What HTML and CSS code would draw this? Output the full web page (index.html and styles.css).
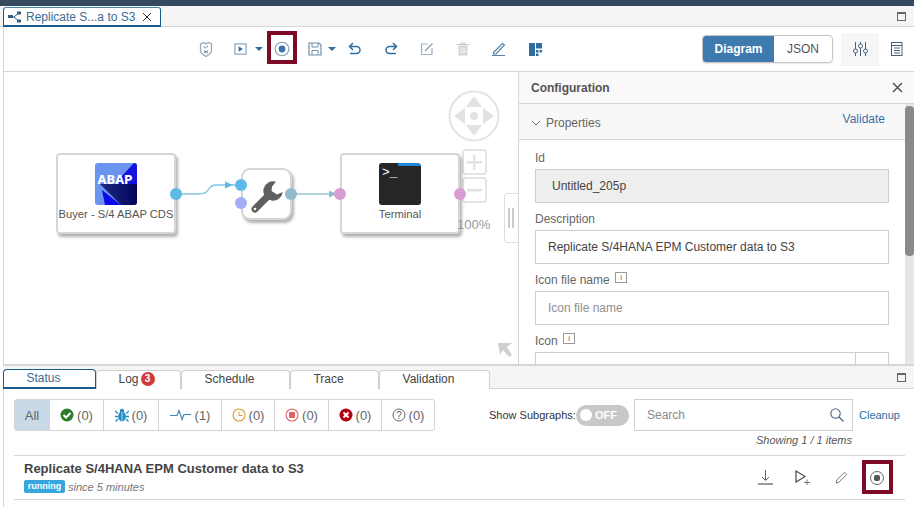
FILE: index.html
```html
<!DOCTYPE html>
<html>
<head>
    <title>Replicate S/4HANA EPM Customer data to S3</title>
    <link rel="stylesheet" href="styles.css">
</head>
<body>
    <div class="topbar"></div>

    <div class="tabstrip">
        <div class="doc-tab">
            <svg width="13" height="12" viewBox="0 0 13 12"><path d="M2 6h4M6 6l4-3.500M6 6l4 3.500" stroke="#34607f" fill="none"/><rect x="0" y="4" width="5" height="3" fill="#34607f"/><rect x="9" y="0.500" width="4" height="3" fill="#34607f"/><rect x="9" y="8.500" width="4" height="3" fill="#34607f"/></svg>
            <span class="doc-tab-name">Replicate S...a to S3</span>
            <svg width="10" height="10" viewBox="0 0 10 10"><path d="M1 1l8 8M9 1l-8 8" stroke="#333" fill="none"/></svg>
        </div>
        <span class="maximize"></span>
    </div>

    <div class="toolbar">
        <div class="tool tool-first"><svg width="14" height="16" viewBox="0 0 14 16"><path d="M1.500 3l3-1.500 2.500 1.500 2.500-1.500 3 1.500v7c0 2-3 4-5.500 5.500C4.500 14 1.500 12 1.500 10z" fill="none" stroke="#9aa7b2" stroke-width="1.300"/><path d="M4.500 5.500l2 1.500 2.500-2M5 9.500l4 2.500M9 9.500l-4 2.500" fill="none" stroke="#5c7f9c"/></svg></div>
        <div class="tool tool-group"><svg width="14" height="14" viewBox="0 0 14 14"><rect x="1" y="1.500" width="12" height="11" fill="none" stroke="#7f9db8" stroke-width="1.200"/><path d="M5 4l4.500 3L5 10z" fill="#2f6da0"/></svg><span class="caret"></span></div>
        <div class="tool tool-stop"><svg width="16" height="16" viewBox="0 0 16 16"><circle cx="8" cy="8" r="6.800" fill="none" stroke="#7f9db8" stroke-width="1.100"/><circle cx="8" cy="8" r="3.400" fill="#3d74a8"/></svg></div>
        <div class="tool tool-group tool-save"><svg width="14" height="14" viewBox="0 0 14 14"><path d="M1 1h10l2 2v10H1z" fill="none" stroke="#6f90ab" stroke-width="1.200"/><path d="M4 1v4h6V1M4 13V8.500h6V13" fill="none" stroke="#6f90ab"/></svg><span class="caret"></span></div>
        <div class="tool"><svg width="14" height="14" viewBox="0 0 14 14"><path d="M5 1L1.500 4.500 5 8M2 4.500h6.500a3.500 3.500 0 0 1 0 7H2" fill="none" stroke="#2f6da0" stroke-width="1.500"/></svg></div>
        <div class="tool"><svg width="14" height="14" viewBox="0 0 14 14"><path d="M9 1l3.500 3.500L9 8M12 4.500H5.500a3.500 3.500 0 0 0 0 7H12" fill="none" stroke="#2f6da0" stroke-width="1.500"/></svg></div>
        <div class="tool"><svg width="14" height="14" viewBox="0 0 14 14"><path d="M8 2H1.500v10.500H12V6" fill="none" stroke="#9db3c5" stroke-width="1.200"/><path d="M5 9l7.500-7.500" stroke="#7d9ab2" stroke-width="1.200"/></svg></div>
        <div class="tool"><svg width="12" height="14" viewBox="0 0 12 14"><path d="M0 2.500h12M4 2.500V1h4v1.500" stroke="#c9c9c9" fill="none"/><path d="M1.500 3.500h9V13.500h-9z" fill="#d4d4d4"/><path d="M4 5.500v6M6 5.500v6M8 5.500v6" stroke="#f5f5f5"/></svg></div>
        <div class="tool"><svg width="14" height="14" viewBox="0 0 14 14"><path d="M1.500 10.500L10.500 1.500l2 1.500-8.500 9H1.500z" fill="none" stroke="#4f81ab" stroke-width="1.100"/><path d="M0 13.500h13" stroke="#4f81ab"/></svg></div>
        <div class="tool"><svg width="13" height="13" viewBox="0 0 13 13"><rect width="6" height="13" fill="#2f6da0"/><rect x="7" width="6" height="5.500" fill="#2f6da0"/><rect x="7" y="7" width="2.500" height="2.500" fill="#2f6da0"/><rect x="10.500" y="7" width="2.500" height="2.500" fill="#2f6da0"/><rect x="7" y="10.500" width="2.500" height="2.500" fill="#2f6da0"/></svg></div>
        <div class="toolbar-right">
            <div class="segmented">
                <span class="seg seg-on">Diagram</span>
                <span class="seg">JSON</span>
            </div>
            <div class="side-btn side-btn-on"><svg width="15" height="14" viewBox="0 0 15 14"><path d="M2.500 0v14M7.500 0v14M12.500 0v14" stroke="#47617a"/><circle cx="2.500" cy="9" r="2" fill="#fff" stroke="#47617a"/><circle cx="7.500" cy="4" r="2" fill="#fff" stroke="#47617a"/><circle cx="12.500" cy="9" r="2" fill="#fff" stroke="#47617a"/></svg></div>
            <div class="side-btn"><svg width="12" height="14" viewBox="0 0 12 14"><rect x="0.500" y="0.500" width="10.500" height="13" fill="none" stroke="#47617a"/><path d="M0.500 3.500h10.500M3 6h6M3 8.500h6M3 11h6" stroke="#47617a"/></svg></div>
        </div>
    </div>

    <div class="main">
        <div class="canvas">
            <svg class="links" width="514" height="291" viewBox="0 0 514 291">
                <path d="M172 122h22c14 0 8-9 18-9h20" fill="none" stroke="#7cc4e6" stroke-width="1.300"/>
                <path d="M229 113l-8-3.500v7z" fill="#5fb8e3"/>
                <path d="M287 122h42" fill="none" stroke="#9cc2d3" stroke-width="1.300"/>
                <path d="M333 122l-8-3.500v7z" fill="#93bccd"/>
                <g fill="none" stroke="#e4e4e4" stroke-width="2">
                    <circle cx="470" cy="44" r="24.500"/>
                    <rect x="459" y="78" width="23" height="24" rx="3"/>
                    <rect x="459" y="106" width="23" height="24" rx="3"/>
                </g>
                <g fill="#e2e2e2">
                    <path d="M470 24l8 11h-16zM470 64l8-11h-16zM450 44l11-8v16zM490 44l-11-8v16z"/>
                    <circle cx="470" cy="44" r="4"/>
                    <path d="M463 89h15v2.500h-15zM469 83h2.500v15H469zM463 117h15v2.500h-15z"/>
                    <path d="M494 271h14l-5 4 5 8-3 2-6-7-3 5z" fill="#cfcfcf"/>
                </g>
            </svg>

            <div class="node node-abap">
                <svg width="42" height="42" viewBox="0 0 42 42">
                    <defs><linearGradient id="abapShade" x1="0" y1="0" x2="1" y2="0"><stop offset="0" stop-color="#1c2a80"/><stop offset="1" stop-color="#04045c"/></linearGradient></defs>
                    <rect width="42" height="42" rx="3" fill="#6b93f0"/>
                    <path d="M24 16L39 0a3 3 0 0 1 3 3v18H24z" fill="#1414e0"/>
                    <path d="M5 21h37v18a3 3 0 0 1-3 3H26z" fill="url(#abapShade)"/>
                    <path d="M7 27l19 15H10z" fill="#0a0ae6"/>
                    <text x="20" y="21" text-anchor="middle" class="abap-text">ABAP</text>
                </svg>
                <span class="node-label">Buyer - S/4 ABAP CDS</span>
            </div>
            <div class="node node-tool">
                <svg width="36" height="36" viewBox="0 0 36 36"><path d="M5 29l12-12" stroke="#5f5f5f" stroke-width="7" stroke-linecap="round"/><path d="M26 1.700A9.700 9.700 0 1 0 32.700 12L27 14.500 21.500 11 22 6.500z" fill="#5f5f5f"/><circle cx="5" cy="29" r="1.300" fill="#fff"/></svg>
            </div>
            <div class="node node-term">
                <div class="term-icon"><span class="term-prompt">&gt;_</span></div>
                <span class="node-label">Terminal</span>
            </div>

            <span class="port port-a"></span>
            <span class="port port-b"></span>
            <span class="port port-c"></span>
            <span class="port port-d"></span>
            <span class="port port-e"></span>
            <span class="port port-f"></span>
            <span class="zoom-level">100%</span>
            <div class="handle"></div>
        </div>

        <div class="config">
            <div class="config-head">
                <span>Configuration</span>
                <svg width="11" height="11" viewBox="0 0 11 11"><path d="M1 1l9 9M10 1l-9 9" stroke="#555" stroke-width="1.500" fill="none"/></svg>
            </div>
            <div class="config-body">
                <div class="config-form">
                    <div class="props-head">
                        <svg width="10" height="6" viewBox="0 0 10 6"><path d="M1 1l4 4 4-4" stroke="#777" fill="none"/></svg>
                        <span class="props-title">Properties</span>
                        <a class="validate">Validate</a>
                    </div>
                    <label class="field-label">Id</label>
                    <div class="field field-off">Untitled_205p</div>
                    <label class="field-label">Description</label>
                    <div class="field">Replicate S/4HANA EPM Customer data to S3</div>
                    <label class="field-label">Icon file name <span class="info">i</span></label>
                    <div class="field field-empty">Icon file name</div>
                    <label class="field-label">Icon <span class="info">i</span></label>
                    <div class="field field-split"><span></span></div>
                </div>
                <div class="scrollbar"><span class="thumb"></span></div>
            </div>
        </div>
    </div>

    <div class="bottom">
        <div class="bottom-tabs">
            <span class="btab btab-on btab-status">Status</span>
            <span class="btab btab-log">Log<span class="badge">3</span></span>
            <span class="btab btab-schedule">Schedule</span>
            <span class="btab btab-trace">Trace</span>
            <span class="btab btab-validation">Validation</span>
            <span class="maximize"></span>
        </div>
        <div class="status-panel">
            <div class="filter-row">
                <div class="filters">
                    <span class="filter filter-on">All</span>
                    <span class="filter f1"><svg width="14" height="14" viewBox="0 0 14 14"><circle cx="7" cy="7" r="6.500" fill="#2b7d2b"/><path d="M3.500 7l2.500 2.500 4.500-4.500" stroke="#fff" stroke-width="2" fill="none"/></svg>(0)</span>
                    <span class="filter f2"><svg width="14" height="14" viewBox="0 0 14 14"><ellipse cx="7" cy="8.500" rx="3.800" ry="5" fill="#1f8dc4"/><circle cx="7" cy="3" r="2.200" fill="#1f8dc4"/><path d="M0 3l3 2.500M14 3l-3 2.500M0 8.500h3M11 8.500h3M0.500 13.500L3 11M13.500 13.500L11 11" stroke="#1f8dc4" stroke-width="1.300"/><path d="M7 4v9" stroke="#fff" stroke-width=".7"/></svg>(0)</span>
                    <span class="filter f3"><svg width="22" height="12" viewBox="0 0 22 12"><path d="M0 6.500h7l2-5 3 9 2-5h7" fill="none" stroke="#3d86b8" stroke-width="1.200"/></svg>(1)</span>
                    <span class="filter f4"><svg width="14" height="14" viewBox="0 0 14 14"><circle cx="7" cy="7" r="6" fill="none" stroke="#dd9a3c" stroke-width="1.100"/><path d="M7 3.500V7.500h3.500" fill="none" stroke="#dd9a3c"/></svg>(0)</span>
                    <span class="filter f5"><svg width="14" height="14" viewBox="0 0 14 14"><circle cx="7" cy="7" r="6" fill="none" stroke="#e26565" stroke-width="1.100"/><rect x="4" y="4" width="6" height="6" rx="1" fill="#e26565"/></svg>(0)</span>
                    <span class="filter f6"><svg width="14" height="14" viewBox="0 0 14 14"><circle cx="7" cy="7" r="6.500" fill="#b00012"/><path d="M4.500 4.500l5 5M9.500 4.500l-5 5" stroke="#fff" stroke-width="2"/></svg>(0)</span>
                    <span class="filter f7"><svg width="14" height="14" viewBox="0 0 14 14"><circle cx="7" cy="7" r="6" fill="none" stroke="#666" stroke-width="1"/><text x="7" y="10.500" text-anchor="middle" class="help-text">?</text></svg>(0)</span>
                </div>
                <div class="filter-right">
                    <span class="subgraph-label">Show Subgraphs:</span>
                    <span class="toggle"><span class="knob"></span><span class="toggle-text">OFF</span></span>
                    <div class="search">
                        <span>Search</span>
                        <svg width="14" height="14" viewBox="0 0 14 14"><circle cx="5.500" cy="5.500" r="4.700" fill="none" stroke="#4d6a86" stroke-width="1.100"/><path d="M9 9l4.500 4.500" stroke="#4d6a86" stroke-width="1.300"/></svg>
                    </div>
                    <a class="cleanup">Cleanup</a>
                </div>
            </div>
            <div class="showing">Showing 1 / 1 items</div>
            <div class="run">
                <div class="run-info">
                    <div class="run-title">Replicate S/4HANA EPM Customer data to S3</div>
                    <div class="run-meta"><span class="run-state">running</span><em>since 5 minutes</em></div>
                </div>
                <div class="run-actions">
                    <svg width="15" height="15" viewBox="0 0 15 15"><path d="M7.500 0v10M4 7l3.500 3.500L11 7" fill="none" stroke="#666" stroke-width="1"/><path d="M0 14h15" stroke="#666" stroke-width="1.300"/></svg>
                    <svg width="15" height="15" viewBox="0 0 15 15"><path d="M1 1l9 5.500L1 12z" fill="none" stroke="#555" stroke-width="1.300"/><path d="M9 12.500h6M12 9.500v5.500" stroke="#777"/></svg>
                    <svg width="13" height="13" viewBox="0 0 13 13"><path d="M1 12l.8-3L9.500 1.300l2.200 2.200L4 11.200z" fill="none" stroke="#777"/></svg>
                    <svg width="14" height="14" viewBox="0 0 14 14"><circle cx="7" cy="7" r="6.500" fill="none" stroke="#666"/><rect x="4" y="4" width="6" height="6" rx="2" fill="#555"/></svg>
                </div>
            </div>
        </div>
    </div>

    <span class="callout callout-top"></span>
    <span class="callout callout-row"></span>
</body>
</html>
```

FILE: styles.css
```css
* {
    box-sizing: border-box;
}
html, body {
    margin: 0;
    padding: 0;
    height: 507px;
    overflow: hidden;
}
body {
    font-family: "Liberation Sans", Arial, sans-serif;
    font-size: 12px;
    color: #333;
    background-color: #fff;
    position: relative;
}
.topbar {
    height: 6px;
    background-color: #354a5f;
}

/* document tab */
.tabstrip {
    height: 21px;
    padding: 1px 8px 0 3px;
    background-color: #f5f5f5;
    border-bottom: 1px solid #d5d5d5;
    display: flex;
    justify-content: space-between;
    align-items: flex-start;
}
.doc-tab {
    width: 158px;
    height: 20px;
    background-color: #fff;
    border: 1px solid #155a8a;
    border-top-color: #4f85ab;
    border-bottom-width: 2px;
    border-radius: 3px 3px 0 0;
    display: flex;
    align-items: center;
    padding: 0 8px 0 4px;
    color: #3f6b91;
}
.doc-tab-name {
    margin: 0 6px 0 5px;
    flex: 1;
    white-space: nowrap;
}
.maximize {
    width: 9px;
    height: 9px;
    margin-top: 5px;
    border: 1px solid #666;
    border-top-width: 2px;
}

/* toolbar */
.toolbar {
    height: 45px;
    margin-left: 3px;
    border-left: 1px solid #d5d5d5;
    border-bottom: 1px solid #d5d5d5;
    display: flex;
    align-items: center;
}
.tool {
    width: 36px;
    height: 30px;
    flex: none;
    display: flex;
    align-items: center;
    justify-content: center;
}
.tool-first {
    margin-left: 184px;
}
.tool-group {
    width: 31px;
    margin-left: 8px;
    justify-content: flex-start;
    padding-left: 2px;
}
.tool-stop {
    width: 30px;
    margin-left: 4px;
}
.tool-save {
    width: 29px;
    margin-left: 11px;
    padding-left: 0;
}
.tool-group .caret {
    margin-left: 8px;
}
.tool-save .caret {
    margin-left: 6px;
}
.caret {
    border-top: 4px solid #2f6da0;
    border-left: 4px solid transparent;
    border-right: 4px solid transparent;
}
.toolbar-right {
    margin-left: auto;
    display: flex;
    align-items: center;
}
.segmented {
    display: flex;
    width: 131px;
    height: 28px;
    margin-right: 8px;
    border: 1px solid #c8c8c8;
    border-radius: 4px;
    box-shadow: 0 1px 2px rgba(0, 0, 0, 0.1);
    overflow: hidden;
}
.seg {
    flex: 1;
    display: flex;
    align-items: center;
    justify-content: center;
    color: #555;
}
.seg-on {
    flex: none;
    width: 71px;
    background-color: #3f7aae;
    color: #fff;
    font-weight: bold;
}
.side-btn {
    width: 35px;
    height: 33px;
    display: flex;
    align-items: center;
    justify-content: center;
}
.side-btn-on {
    width: 38px;
    background-color: #f6f6f6;
}

/* canvas and config */
.main {
    height: 292px;
    margin-left: 3px;
    border-left: 1px solid #d5d5d5;
    display: flex;
}
.canvas {
    position: relative;
    width: 515px;
    flex: none;
    border-right: 1px solid #d5d5d5;
}
.links {
    position: absolute;
    left: 0;
    top: 0;
}
.node {
    position: absolute;
    background-color: #fff;
    border: 2px solid #d6d6d6;
    border-radius: 4px;
    box-shadow: 2px 3px 3px rgba(0, 0, 0, 0.3);
    display: flex;
    flex-direction: column;
    align-items: center;
    padding-top: 7px;
}
.node-abap {
    left: 52px;
    top: 81px;
    width: 120px;
    height: 81px;
    padding-top: 8px;
}
.node-tool {
    left: 237px;
    top: 96px;
    width: 51px;
    height: 52px;
    border-radius: 9px;
    padding: 10px 0 0 2px;
}
.node-term {
    left: 336px;
    top: 81px;
    width: 120px;
    height: 81px;
    padding-top: 8px;
}
.node-label {
    margin-top: 2px;
    color: #555;
    font-size: 11.200px;
    line-height: 14px;
    white-space: nowrap;
}
.abap-text {
    font-family: "DejaVu Sans", sans-serif;
    font-weight: bold;
    font-size: 11.500px;
    fill: #fff;
}
.term-icon {
    width: 42px;
    height: 42px;
    border-radius: 3px;
    background: linear-gradient(#1f86d8, #1f86d8) right top / 23px 3px no-repeat #262626;
    color: #fff;
    padding: 2px 0 0 3px;
}
.term-prompt {
    font-family: "Liberation Mono", monospace;
    font-size: 13px;
    line-height: 16px;
}
.port {
    position: absolute;
    width: 12px;
    height: 12px;
    border-radius: 50%;
}
.port-a { left: 166px; top: 116px; background-color: #5cbae6; }
.port-b { left: 231px; top: 107px; background-color: #5cbae6; }
.port-c { left: 231px; top: 125px; background-color: #a3aef5; }
.port-d { left: 281px; top: 116px; background-color: #90bcce; }
.port-e { left: 330px; top: 116px; background-color: #d99dd2; }
.port-f { left: 450px; top: 116px; background-color: #d99dd2; }
.zoom-level {
    position: absolute;
    left: 453px;
    top: 145px;
    font-size: 13px;
    color: #9a9a9a;
}
.handle {
    position: absolute;
    right: 0;
    top: 121px;
    width: 14px;
    height: 50px;
    background: linear-gradient(#ccc, #ccc) 3px 14px / 2px 20px no-repeat,
                linear-gradient(#ccc, #ccc) 7px 14px / 2px 20px no-repeat #fff;
    border: 1px solid #ddd;
    border-right: none;
    border-radius: 4px 0 0 4px;
}
.config {
    flex: 1;
    min-width: 0;
    display: flex;
    flex-direction: column;
}
.config-head {
    height: 32px;
    flex: none;
    padding: 0 11px 0 12px;
    background-color: #f9f9f9;
    border-bottom: 1px solid #d5d5d5;
    display: flex;
    align-items: center;
    justify-content: space-between;
    font-weight: bold;
    color: #555;
}
.config-body {
    flex: 1;
    display: flex;
    min-height: 0;
}
.config-form {
    flex: 1;
    overflow: hidden;
}
.props-head {
    height: 36px;
    padding: 3px 20px 0 12px;
    background-color: #f8f8f8;
    border-bottom: 1px solid #d5d5d5;
    display: flex;
    align-items: center;
}
.props-title {
    margin-left: 5px;
    color: #666;
    flex: 1;
}
.validate {
    color: #3f6f9f;
    margin-top: -8px;
}
.field-label {
    display: block;
    margin: 10px 0 0 16px;
    height: 19px;
    line-height: 17px;
    color: #666;
}
.config-form .field-label:nth-of-type(n+2) {
    margin-top: 8px;
}
.field {
    margin-left: 16px;
    width: 354px;
    height: 34px;
    border: 1px solid #cfcfcf;
    display: flex;
    align-items: center;
    padding-left: 12px;
    color: #444;
}
.field-off {
    background-color: #eee;
    padding-left: 16px;
}
.field-empty {
    color: #8f8f8f;
}
.field-split {
    padding-left: 319px;
}
.field-split span {
    height: 100%;
    border-left: 1px solid #cfcfcf;
}
.info {
    display: inline-block;
    width: 12px;
    height: 11px;
    margin: 0 0 7px 2px;
    border: 1px solid #999;
    font-size: 8px;
    line-height: 9px;
    text-align: center;
    vertical-align: middle;
}
.scrollbar {
    width: 9px;
    flex: none;
    background-color: #e6e6e6;
    padding-top: 2px;
}
.thumb {
    display: block;
    height: 150px;
    background-color: #8a8a8a;
    border-radius: 4px;
}

/* bottom panel */
.bottom {
    border-top: 2px solid #d5d5d5;
    margin-left: 3px;
    height: 142px;
}
.bottom-tabs {
    height: 23px;
    padding-right: 8px;
    background-color: #f5f5f5;
    border-bottom: 1px solid #d5d5d5;
    display: flex;
    align-items: flex-end;
}
.btab {
    height: 19px;
    padding: 0 12px 2px 0;
    background-color: #fff;
    border: 1px solid #d0d0d0;
    border-bottom: none;
    border-radius: 4px 4px 0 0;
    display: flex;
    align-items: center;
    justify-content: center;
    color: #444;
    margin-bottom: -1px;
}
.btab-on {
    height: 20px;
    border: 1px solid #155a8a;
    border-bottom-width: 2px;
    color: #3f6b91;
}
.btab-status { width: 93px; }
.btab-log { width: 85px; padding-right: 4px; }
.btab-schedule { width: 109px; }
.btab-trace { width: 89px; }
.btab-validation { width: 111px; }
.badge {
    width: 14px;
    height: 14px;
    margin-left: 2px;
    border-radius: 50%;
    background-color: #d13b3b;
    color: #fff;
    font-size: 10px;
    font-weight: bold;
    text-align: center;
    line-height: 14px;
}
.bottom-tabs .maximize {
    margin: 0 0 6px auto;
}
.status-panel {
    padding: 10px 14px 0 10px;
    border-left: 1px solid #d5d5d5;
    height: 118px;
}
.filter-row {
    display: flex;
    justify-content: space-between;
    height: 32px;
}
.filters {
    display: flex;
    width: 421px;
    border: 1px solid #d5d5d5;
    border-radius: 3px;
}
.filter {
    display: flex;
    align-items: center;
    justify-content: center;
    gap: 3px;
    border-right: 1px solid #d5d5d5;
    color: #666;
    font-size: 13px;
}
.filter:last-child {
    border-right: none;
}
.filter-on {
    width: 35px;
    background-color: #c9d9e8;
}
.f1 { width: 54px; }
.f2 { width: 55px; }
.f3 { width: 63px; }
.f4 { width: 53px; }
.f5 { width: 54px; }
.f6 { width: 53px; }
.f7 { flex: 1; }
.help-text {
    font-family: "Liberation Sans", Arial, sans-serif;
    font-size: 10px;
    fill: #666;
}
.filter-right {
    display: flex;
    align-items: center;
    margin-right: -10px;
    width: 421px;
}
.subgraph-label {
    width: 87px;
    white-space: nowrap;
    font-size: 11px;
}
.toggle {
    width: 53px;
    height: 21px;
    border-radius: 11px;
    background-color: #c8c8c8;
    display: flex;
    align-items: center;
    padding-left: 1px;
}
.knob {
    width: 12px;
    height: 12px;
    margin-left: 3px;
    border-radius: 50%;
    background-color: #fff;
}
.toggle-text {
    margin-left: 3px;
    color: #fff;
    font-size: 11px;
    font-weight: bold;
}
.search {
    width: 219px;
    height: 32px;
    margin-left: 5px;
    border: 1px solid #cfcfcf;
    display: flex;
    align-items: center;
    justify-content: space-between;
    padding: 0 8px 0 12px;
    color: #8a8a8a;
}
.cleanup {
    margin-left: 6px;
    color: #27719f;
    font-size: 11px;
}
.showing {
    height: 24px;
    padding: 3px 48px 0 0;
    text-align: right;
    font-size: 11px;
    font-style: italic;
    color: #555;
}
.run {
    height: 45px;
    margin-right: -5px;
    border-top: 1px solid #d5d5d5;
    border-bottom: 1px solid #d5d5d5;
    display: flex;
    justify-content: space-between;
    align-items: center;
    padding-left: 10px;
}
.run-title {
    font-size: 13px;
    font-weight: bold;
    color: #444;
    line-height: 16px;
    margin-top: -1px;
}
.run-meta {
    display: flex;
    align-items: center;
    margin-top: 3px;
    font-size: 11px;
    color: #777;
}
.run-state {
    width: 41px;
    height: 13px;
    margin-right: 3px;
    border-radius: 2px;
    background-color: #36a7dc;
    color: #fff;
    font-size: 9px;
    font-weight: bold;
    text-align: center;
    line-height: 13px;
}
.run-actions {
    display: flex;
    align-items: center;
    gap: 22px;
    padding-right: 21px;
}
.run-actions svg:nth-child(3) {
    margin-left: 3px;
}

/* red callouts over the screenshot */
.callout {
    position: absolute;
    border: 4px solid #7c0a24;
}
.callout-top {
    left: 267px;
    top: 31px;
    width: 30px;
    height: 33px;
}
.callout-row {
    left: 862px;
    top: 460px;
    width: 31px;
    height: 34px;
}
```
